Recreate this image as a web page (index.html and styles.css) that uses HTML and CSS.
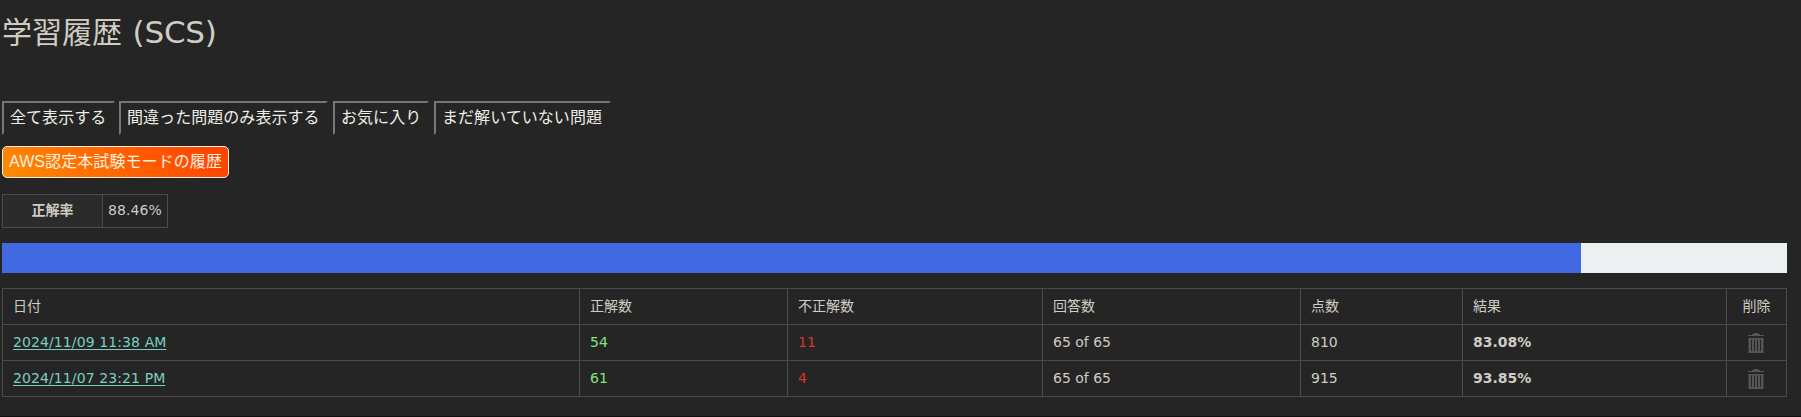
FILE: index.html
```html
<!DOCTYPE html>
<html lang="ja">
<head>
<meta charset="utf-8">
<title>学習履歴 (SCS)</title>
<link rel="stylesheet" href="styles.css">
</head>
<body>
<svg class="sprite" aria-hidden="true"><symbol id="trash" viewBox="0 0 16 20"><path fill-rule="evenodd" d="M6 0h4v1h2v1h4v1H0V2h4V1h2zM0.5 5h15v15h-15zM3 6.5v11.5h1v-11.5zM6 6.5v11.5h1v-11.5zM9 6.5v11.5h1v-11.5zM12 6.5v11.5h1v-11.5z"/></symbol></svg>
<main class="page">
  <h1 class="title">学習履歴 <span class="exam-code">(SCS)</span></h1>
  <nav class="tabs">
    <a class="tab tab-all">全て表示する</a>
    <a class="tab tab-wrong">間違った問題のみ表示する</a>
    <a class="tab tab-favorite">お気に入り</a>
    <a class="tab tab-unsolved">まだ解いていない問題</a>
  </nav>
  <a class="exam-button">AWS認定本試験モードの履歴</a>
  <div class="rate"><div class="rate-label">正解率</div><div class="rate-value">88.46%</div></div>
  <div class="progress"><div class="progress-fill" style="width:88.46%"></div></div>
  <table class="history">
    <colgroup><col class="c-date"><col class="c-correct"><col class="c-wrong"><col class="c-answered"><col class="c-score"><col class="c-result"><col class="c-delete"></colgroup>
    <tr><td>日付</td><td>正解数</td><td>不正解数</td><td>回答数</td><td>点数</td><td>結果</td><td class="delete">削除</td></tr>
    <tr><td><a class="date">2024/11/09 11:38 AM</a></td><td class="correct">54</td><td class="wrong">11</td><td>65 of 65</td><td>810</td><td class="result">83.08%</td><td class="delete"><svg class="trash"><use href="#trash"/></svg></td></tr>
    <tr><td><a class="date">2024/11/07 23:21 PM</a></td><td class="correct">61</td><td class="wrong">4</td><td>65 of 65</td><td>915</td><td class="result">93.85%</td><td class="delete"><svg class="trash"><use href="#trash"/></svg></td></tr>
  </table>
</main>
</body>
</html>
```
FILE: styles.css
```css
* { box-sizing: border-box; }
body {
  margin: 0;
  height: 417px;
  overflow: hidden;
  background: #252525;
  border-bottom: 1px solid #111;
  color: #cfccc3;
  font: 14px/20px "DejaVu Sans", "Noto Sans CJK JP", sans-serif;
}
.sprite { display: none; }
.page { width: 1787px; padding: 14px 0 0 2px; }
.title {
  margin: 0;
  height: 87px;
  font-size: 30px;
  line-height: 38px;
  font-weight: 400;
  white-space: nowrap;
}
.exam-code {
  margin-left: 1px;
  font-size: 31px;
  line-height: 30px;
  letter-spacing: -0.2px;
}
.tabs { display: flex; height: 45px; }
.tab {
  height: 34px;
  padding: 1px 0 0 6px;
  border: 2px solid;
  border-color: #767676 #252525 #252525 #767676;
  color: #eeeee6;
  font: 16px/24px "Noto Sans CJK JP", sans-serif;
  letter-spacing: 0.05px;
  white-space: nowrap;
}
.tab-all { width: 113px; margin-right: 4px; }
.tab-wrong { width: 209px; margin-right: 5px; }
.tab-favorite { width: 96px; margin-right: 5px; }
.tab-unsolved { width: 177px; }
.exam-button {
  display: block;
  width: 227px;
  height: 32px;
  padding-left: 6px;
  border: 1px solid #f5eee6;
  border-radius: 5px;
  background: linear-gradient(45deg, #ff8c00, #ff4500 90%);
  color: #fff0e0;
  font: 16px/30px "Liberation Sans", "Noto Sans CJK JP", sans-serif;
  letter-spacing: 0.08px;
  white-space: nowrap;
}
.rate {
  display: flex;
  width: 166px;
  height: 34px;
  margin: 16px 0 15px;
  border: 1px solid #4c4c4c;
  line-height: 31px;
}
.rate-label {
  width: 100px;
  border-right: 1px solid #4c4c4c;
  background: #2b2b2b;
  font-weight: 700;
  text-align: center;
}
.rate-value { padding-left: 5px; letter-spacing: 0.1px; }
.progress { width: 1785px; height: 30px; background: #ecf0f1; }
.progress-fill { height: 100%; background: #4169e1; }
.history {
  width: 1785px;
  margin-top: 15px;
  table-layout: fixed;
  border-spacing: 0;
  border: solid #4c4c4c;
  border-width: 0 1px 1px 0;
}
.history td {
  height: 36px;
  padding: 0 0 1px 10px;
  border: solid #4c4c4c;
  border-width: 1px 0 0 1px;
  vertical-align: middle;
}
.c-date { width: 577px; }
.c-correct { width: 208px; }
.c-wrong { width: 255px; }
.c-answered { width: 258px; }
.c-score { width: 162px; }
.c-result { width: 264px; }
.c-delete { width: 60px; }
.history .delete { padding-left: 0; text-align: center; }
.date {
  color: #79d0c0;
  letter-spacing: 0.1px;
  text-decoration: underline;
  text-underline-offset: 2px;
}
.history .correct { color: #7ee87a; }
.history .wrong { color: #d43434; }
.history .result { font-weight: 700; }
.trash { display: block; width: 16px; height: 20px; margin: 2px auto 0 21px; fill: #555; }
```
